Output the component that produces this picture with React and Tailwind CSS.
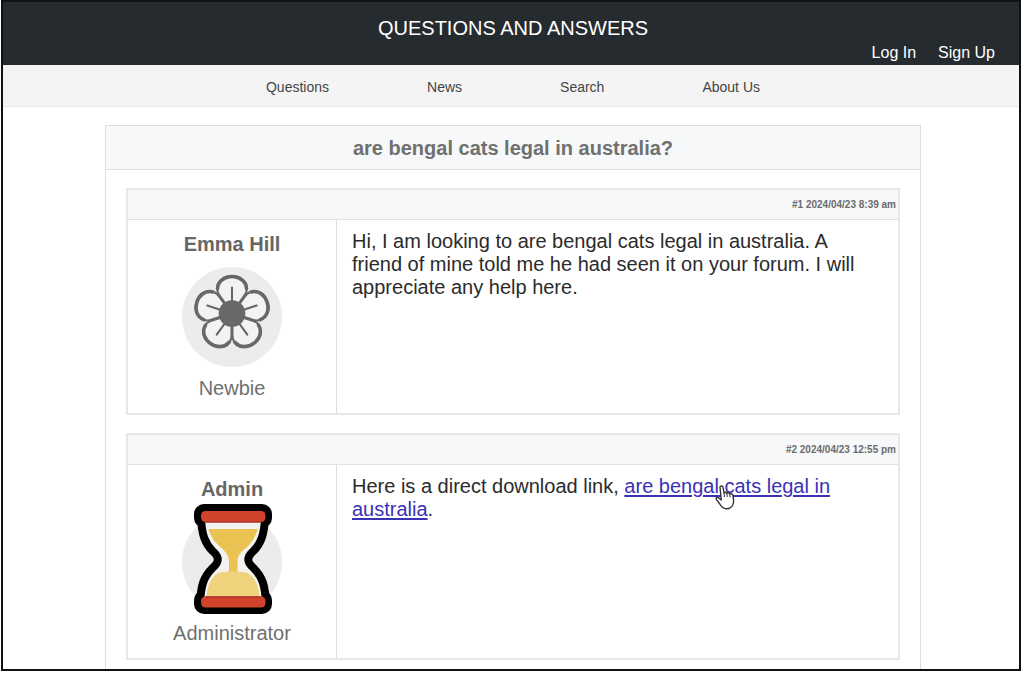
import React from 'react';

const navItems = ['Questions', 'News', 'Search', 'About Us'];

function FlowerAvatar() {
  return (
    <svg viewBox="0 0 100 100" className="size-[100px] overflow-visible" aria-hidden="true">
      <circle cx="50" cy="50" r="50" fill="#ececec" />
      <g transform="translate(50 46.5) scale(1.04)" stroke="#686868" strokeLinecap="round">
        {[0, 72, 144, 216, 288].map((angle) => (
          <g key={angle} transform={`rotate(${angle})`}>
            <path
              d="M-6 -9 L-11 -16 C-18 -24 -13 -36 0 -36 C13 -36 18 -24 11 -16 L6 -9"
              fill="#f3f3f3"
              strokeWidth="2"
            />
            <path
              d="M-14 -24 C-13.5 -32 -6 -35.5 0 -35.5 C6 -35.5 13.5 -32 14 -24"
              fill="none"
              strokeWidth="3.4"
            />
            <path d="M0 -12 V-25" strokeWidth="2" />
          </g>
        ))}
        <circle r="12.8" fill="#686868" stroke="none" />
      </g>
    </svg>
  );
}

function HourglassAvatar() {
  return (
    <svg viewBox="0 0 100 100" className="size-[100px] overflow-visible" aria-hidden="true">
      <circle cx="50" cy="50" r="50" fill="#ececec" />
      <g transform="translate(-0.5 -1)">
        <rect x="16" y="-3.5" width="71" height="17" rx="6.5" fill="#000" stroke="#000" strokeWidth="7" />
        <rect x="16" y="82.5" width="71" height="17" rx="6.5" fill="#000" stroke="#000" strokeWidth="7" />
        <path
          d="M19.5 6 C20 24 24 33 31 40 C38 46 38 51 31 57 C22 66 19.5 74 18.5 92 H84.5 C83.5 74 81 66 72 57 C65 51 65 46 72 40 C79 33 83 24 83.5 6 Z"
          fill="#f3f2ef"
          stroke="#000"
          strokeWidth="8"
        />
        <path d="M27 18 H76 C73 30 67 35 61 40 C57 44 56 47 56 51 V62 H47.5 V51 C47.5 47 46 43 42 39 C36 33 30 29 27 18 Z" fill="#eac353" />
        <path d="M24.5 88 C26 75 29 66 37 62 C42 60 60 60 66 62 C74 66 77 75 78.5 88 Z" fill="#eed27c" />
        <rect x="19.5" y="0" width="64.5" height="11" rx="4.5" fill="#d2432b" />
        <rect x="19.5" y="85.5" width="64.5" height="11" rx="4.5" fill="#d2432b" />
        <path d="M24 11 H79" stroke="#a8322a" strokeWidth="1.5" />
        <path d="M24 86 H79" stroke="#a8322a" strokeWidth="1.5" />
      </g>
    </svg>
  );
}

function HandCursor() {
  return (
    <svg
      viewBox="0 0 20 25"
      className="absolute top-2.5 left-full -ml-1 h-[25px] w-5"
      aria-hidden="true"
    >
      <path
        d="M5 2.2 C5 .6 7.8 .6 8 2.2 L9 8 C9.5 6.8 11.5 7 11.8 8.3 C12.6 7.4 14.4 7.8 14.7 9 C15.8 8.4 17.8 9 18 10.5 L18.6 16 C18.8 20 16 23.8 12 23.8 C8 23.8 6.2 21.6 4.8 19 L1.3 14.3 C.6 12.8 2.3 11.7 3.6 12.8 L6.3 15 Z"
        fill="#fff"
        stroke="#333"
        strokeWidth="1.4"
        strokeLinejoin="round"
      />
      <path d="M9 8 L9.5 12 M11.9 8.5 L12.3 12 M14.8 9.3 L15.1 12.3" fill="none" stroke="#333" strokeWidth="1" />
    </svg>
  );
}

function Post({ stamp, author, role, avatar, children }) {
  return (
    <article className="border-2 border-[#e6e7e8]">
      <div className="border-b border-[#dfe2e4] bg-[#f6f8f9] pr-0.5 text-right text-[10px] leading-[29px] font-bold text-[#6b6b6b]">
        {stamp}
      </div>
      <div className="flex">
        <div className="flex w-[209px] shrink-0 flex-col items-center border-r border-[#dedede] pt-3 pb-[13px] text-xl leading-6 text-[#707070]">
          <h2 className="mb-[11px] font-bold text-[#666]">{author}</h2>
          {avatar}
          <p className="mt-[9px]">{role}</p>
        </div>
        <p className="min-w-0 flex-1 pt-2.5 pr-6 pl-[15px] text-xl leading-[23px] text-[#2b2b2b]">{children}</p>
      </div>
    </article>
  );
}

function App() {
  return (
    <div className="flex min-h-screen flex-col bg-white pr-[3px] pb-0.5 pl-px font-['Liberation_Sans',Arial,sans-serif]">
      <div className="flex flex-1 flex-col border-2 border-[#111]">
        <header className="bg-[#262b30] pt-3.5 text-white">
          <h1 className="pl-1 text-center text-xl leading-6">QUESTIONS AND ANSWERS</h1>
          <div className="mt-px flex justify-end gap-[22px] pr-6 leading-6">
            <a href="#login">Log In</a>
            <a href="#signup">Sign Up</a>
          </div>
        </header>

        <nav className="flex justify-center gap-[98px] border-b border-[#e8e8e8] bg-[#f4f4f4] pt-[3px] pl-1 text-sm leading-[38px] text-[#444]">
          {navItems.map((item) => (
            <a key={item} href={`#${item}`}>{item}</a>
          ))}
        </nav>

        <main className="mt-[18px] mr-[98px] ml-[102px] flex-1 border-x border-t border-[#dcdfe1]">
          <h2 className="border-b border-[#dcdfe1] bg-[#f6f8f9] pt-px text-center text-xl leading-[42px] font-bold text-[#707070]">
            are bengal cats legal in australia?
          </h2>
          <div className="flex flex-col gap-[18px] px-5 pt-[18px] pb-2">
            <Post
              stamp="#1 2024/04/23 8:39 am"
              author="Emma Hill"
              role="Newbie"
              avatar={<FlowerAvatar />}
            >
              Hi, I am looking to are bengal cats legal in australia. A friend of mine told me he had seen it on
              your forum. I will appreciate any help here.
            </Post>
            <Post
              stamp="#2 2024/04/23 12:55 pm"
              author="Admin"
              role="Administrator"
              avatar={<HourglassAvatar />}
            >
              Here is a direct download link,{' '}
              <a href="#download" className="text-[#3a32b4] underline decoration-2 underline-offset-2">
                are <span className="relative">bengal<HandCursor /></span> cats legal in australia
              </a>
              .
            </Post>
          </div>
        </main>
      </div>
    </div>
  );
}

export default App;
